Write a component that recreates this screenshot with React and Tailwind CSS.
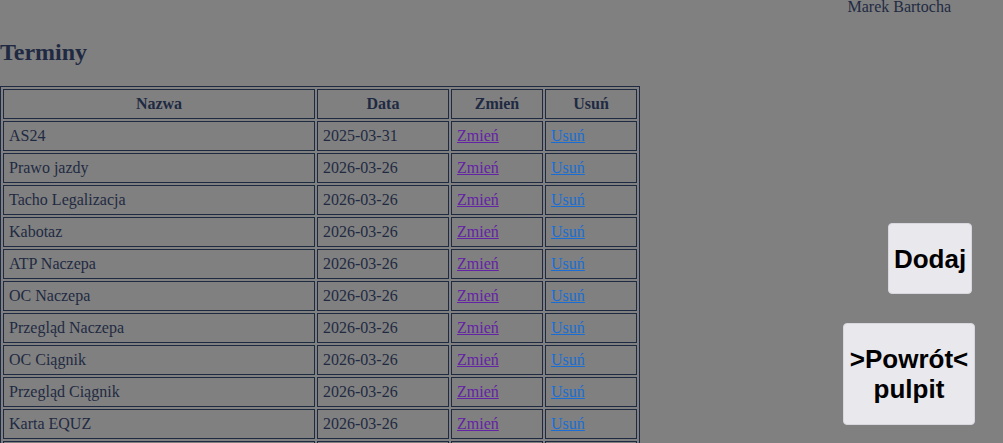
import React from "react";

const rows = [
  { name: "AS24", date: "2025-03-31" },
  { name: "Prawo jazdy", date: "2026-03-26" },
  { name: "Tacho Legalizacja", date: "2026-03-26" },
  { name: "Kabotaz", date: "2026-03-26" },
  { name: "ATP Naczepa", date: "2026-03-26" },
  { name: "OC Naczepa", date: "2026-03-26" },
  { name: "Przegląd Naczepa", date: "2026-03-26" },
  { name: "OC Ciągnik", date: "2026-03-26" },
  { name: "Przegląd Ciągnik", date: "2026-03-26" },
  { name: "Karta EQUZ", date: "2026-03-26" },
  { name: "Badania lekarskie", date: "2026-03-26" },
];

const cell = "border border-[#1f2a42] px-[5px] py-[5px] leading-[18px]";

const App = () => {
  return (
    <div className="h-[443px] bg-[#808080] text-[#1f2a42] font-['Liberation_Serif',serif] text-[16px] overflow-hidden">
      <div className="relative -top-[2px] flex justify-end pr-[52px] leading-[18px]">
        Marek Bartocha
      </div>
      <h2 className="text-[24px] font-bold leading-[28px] mt-[20px] mb-[20px]">
        Terminy
      </h2>
      <div className="flex">
        <table className="flex-none border border-[#1f2a42] border-separate border-spacing-[2px]">
          <thead>
            <tr>
              <th className={cell + " w-[312px] font-bold text-center"}>Nazwa</th>
              <th className={cell + " w-[132px] font-bold text-center"}>Data</th>
              <th className={cell + " w-[92px] font-bold text-center"}>Zmień</th>
              <th className={cell + " w-[92px] font-bold text-center"}>Usuń</th>
            </tr>
          </thead>
          <tbody>
            {rows.map((r) => (
              <tr key={r.name}>
                <td className={cell}>{r.name}</td>
                <td className={cell}>{r.date}</td>
                <td className={cell}>
                  <a href="#" className="text-[#6422a6] underline">
                    Zmień
                  </a>
                </td>
                <td className={cell}>
                  <a href="#" className="text-[#186ed6] underline">
                    Usuń
                  </a>
                </td>
              </tr>
            ))}
          </tbody>
        </table>
        <div className="flex-1 flex flex-col items-end pr-[31px] pt-[137px] gap-[29px] font-['Liberation_Sans',Arial,sans-serif]">
          <button className="w-[84px] h-[71px] rounded-[4px] bg-[#e9e8ed] border border-[#d8d7de] text-black text-[26px] font-bold leading-[30px]">
            Dodaj
          </button>
          <button className="w-[132px] h-[102px] -mr-[3px] rounded-[4px] bg-[#e9e8ed] border border-[#d8d7de] text-black text-[26px] font-bold leading-[30px]">
            &gt;Powrót&lt;
            <br />
            pulpit
          </button>
        </div>
      </div>
    </div>
  );
};

export default App;
